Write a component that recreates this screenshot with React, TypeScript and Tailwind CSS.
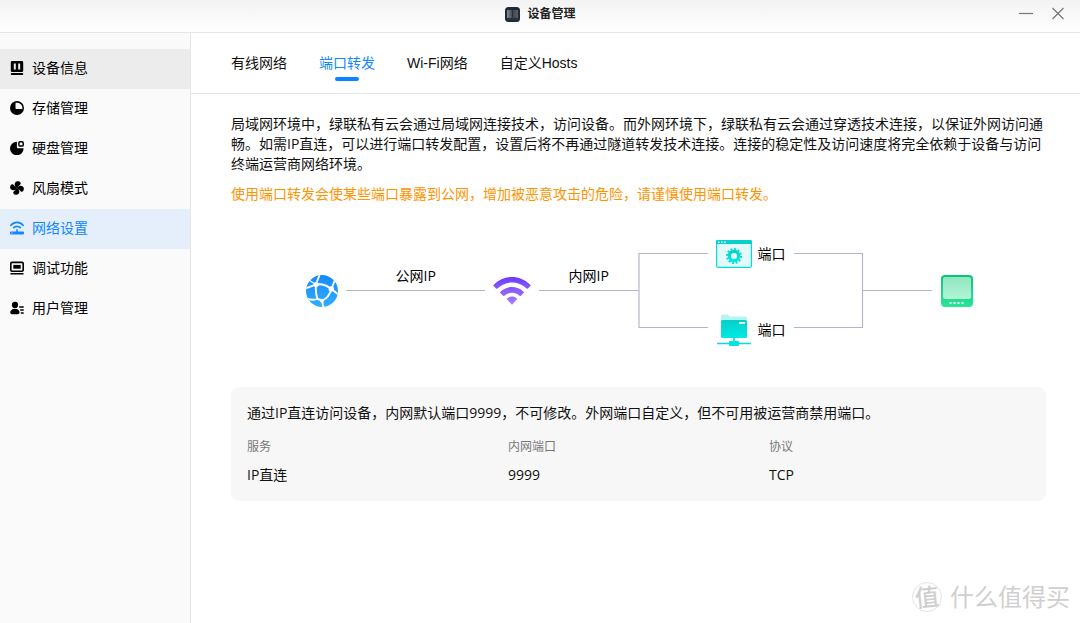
import { useState, type ReactNode } from 'react';

const uiFont = "font-['Open_Sans','Noto_Sans_CJK_SC',sans-serif]";
const tabFont = "font-['Liberation_Sans','Noto_Sans_CJK_SC',sans-serif]";

function MenuIcon({ children }: { children: ReactNode }) {
  return (
    <svg viewBox="0 0 14 14" className="size-[14px] shrink-0" fill="currentColor" aria-hidden="true">
      {children}
    </svg>
  );
}

const menu: { label: string; state?: 'hover' | 'active'; icon: ReactNode }[] = [
  {
    label: '设备信息',
    state: 'hover',
    icon: (
      <MenuIcon>
        <path
          fillRule="evenodd"
          d="M2.1 0h9.800A1.300 1.300 0 0 1 13.200 1.300v8.400a1.300 1.300 0 0 1-1.300 1.300H2.100A1.300 1.300 0 0 1 .8 9.700V1.300A1.300 1.300 0 0 1 2.100 0ZM3.800 2.400v6.200h2V2.400ZM8.200 2.400v6.200h2V2.400Z"
        />
        <rect x="0.800" y="12" width="12.400" height="2" rx="0.800" />
      </MenuIcon>
    ),
  },
  {
    label: '存储管理',
    icon: (
      <MenuIcon>
        <path
          fillRule="evenodd"
          d="M7 0a7 7 0 1 1 0 14A7 7 0 0 1 7 0Zm-.8 1.800A.8.8 0 0 0 5.500 2.600v4.700c0 .5.400.800.800.800h5.500c.5 0 .8-.4.700-.9A5.600 5.600 0 0 0 6.200 1.800Z"
        />
      </MenuIcon>
    ),
  },
  {
    label: '硬盘管理',
    icon: (
      <MenuIcon>
        <path d="M6.900.7v5.500c0 .6.500 1.100 1.100 1.100h5.600A6.800 6.800 0 1 1 6.900.7Z" />
        <rect x="8.900" y="0.800" width="4.300" height="4.300" rx="1.200" fill="none" stroke="currentColor" strokeWidth="1.500" />
      </MenuIcon>
    ),
  },
  {
    label: '风扇模式',
    icon: (
      <MenuIcon>
        <g transform="rotate(12 7 7)">
          <path d="M6.300 6.800C3.200 5.500 3 1 6 .2c2.400-.6 4.200.6 3.600 2.300C9.200 3.800 7.600 4 7.700 6.500Z" />
          <path d="M7.200 6.300C8.500 3.200 13 3 13.800 6c.6 2.400-.6 4.200-2.300 3.600C10.200 9.200 10 7.600 7.500 7.700Z" />
          <path d="M7.700 7.200C10.800 8.500 11 13 8 13.800c-2.400.6-4.200-.6-3.600-2.300C4.800 10.200 6.400 10 6.300 7.500Z" />
          <path d="M6.800 7.700C5.500 10.800 1 11 .2 8c-.6-2.400.6-4.200 2.300-3.600C3.800 4.800 4 6.400 6.500 6.300Z" />
        </g>
      </MenuIcon>
    ),
  },
  {
    label: '网络设置',
    state: 'active',
    icon: (
      <MenuIcon>
        <path
          d="M.9 4.300C4.300.3 9.700.3 13.100 4.300M3.800 6.700c1.800-1.900 4.600-1.900 6.400 0"
          fill="none"
          stroke="currentColor"
          strokeWidth="1.700"
          strokeLinecap="round"
        />
        <path
          fillRule="evenodd"
          d="M6.200 8.200h1.600v2.200h5.300c.5 0 .9.400.9.900v1.200c0 .5-.4.900-.9.900H.9a.9.9 0 0 1-.9-.9v-1.200c0-.5.400-.9.900-.9h5.300ZM1.500 11.400v1h1v-1Z"
        />
      </MenuIcon>
    ),
  },
  {
    label: '调试功能',
    icon: (
      <MenuIcon>
        <rect x="0.800" y="1.400" width="12.400" height="8.800" rx="1.200" fill="none" stroke="currentColor" strokeWidth="1.600" />
        <rect x="3.300" y="3.900" width="7.400" height="3.800" />
        <rect x="0.400" y="12" width="13.200" height="1.600" rx="0.500" />
      </MenuIcon>
    ),
  },
  {
    label: '用户管理',
    icon: (
      <MenuIcon>
        <circle cx="5" cy="3.900" r="3.100" />
        <path d="M5 7.800c1.800 0 3.400.9 4.200 2.200.7 1.200.4 3.200-1.200 3.200H1.900c-1.600 0-2.100-1.900-1.300-3.200A5 5 0 0 1 5 7.800Z" />
        <path d="M9.200 5.200h4.500v1.500H9.200ZM10.200 8.200h3.500v1.500h-3.500ZM10.800 11.200h2.900v1.500h-2.900Z" />
      </MenuIcon>
    ),
  },
];

const tabs = ['有线网络', '端口转发', 'Wi-Fi网络', '自定义Hosts'];

function TitleBar() {
  return (
    <header className="flex h-[33px] items-center border-b border-[#e6e6e6] bg-linear-to-b from-[#f3f3f3] to-white">
      <div className="flex-1" />
      <div className="flex items-center gap-2 pb-1">
        <svg viewBox="0 0 15 15" className="size-[15px]" aria-hidden="true">
          <defs>
            <linearGradient id="app" x1="0" y1="0" x2="1" y2="0">
              <stop offset="0" stopColor="#8a8c96" />
              <stop offset="0.500" stopColor="#40424c" />
              <stop offset="1" stopColor="#5c5e66" />
            </linearGradient>
          </defs>
          <rect width="15" height="15" rx="3.500" fill="#1d2a38" />
          <rect x="2" y="3" width="11" height="8" rx="0.500" fill="url(#app)" />
          <path d="M7.500 3.300v7" stroke="#20242d" strokeWidth="0.700" />
          <path d="M2 12.200h11" stroke="#39434e" strokeWidth="0.800" />
        </svg>
        <h1 className="text-xs font-semibold text-[#222]">设备管理</h1>
      </div>
      <div className="flex flex-1 items-center justify-end pb-1 text-[#777]">
        <div className="-ml-3 flex gap-4 pr-[14px]">
          <button type="button" aria-label="最小化" className="flex size-4 items-center justify-center">
            <svg viewBox="0 0 16 16" className="size-4" aria-hidden="true">
              <path d="M1 7.500h14" stroke="currentColor" strokeWidth="1.200" />
            </svg>
          </button>
          <button type="button" aria-label="关闭" className="flex size-4 items-center justify-center">
            <svg viewBox="0 0 16 16" className="size-4" aria-hidden="true">
              <path d="M2.500 2l11 11M13.500 2l-11 11" stroke="currentColor" strokeWidth="1.200" />
            </svg>
          </button>
        </div>
      </div>
    </header>
  );
}

function Sidebar() {
  const tone = {
    hover: 'bg-[#ececec] text-black',
    active: 'bg-[#e4effb] text-[#1287ff]',
    idle: 'text-black hover:bg-[#ececec]',
  };
  return (
    <nav className="w-[191px] shrink-0 border-r border-[#e6e6e6] bg-[#fafafa] pt-4">
      <ul>
        {menu.map((item) => (
          <li key={item.label}>
            <a
              href="#"
              aria-current={item.state === 'active' ? 'page' : undefined}
              className={`flex h-10 items-center gap-2 pb-0.5 pl-[10px] text-sm ${tone[item.state ?? 'idle']}`}
            >
              {item.icon}
              {item.label}
            </a>
          </li>
        ))}
      </ul>
    </nav>
  );
}

function Diagram() {
  const label = 'absolute text-sm leading-5 text-black';
  return (
    <div className="relative mx-auto h-[110px] w-[668px]">
      <svg viewBox="0 0 668 110" className="h-[110px] w-[668px]" fill="none" aria-hidden="true">
        <defs>
          <linearGradient id="ball" x1="0" y1="0" x2="0" y2="1">
            <stop stopColor="#1788fb" />
            <stop offset="1" stopColor="#2eafff" />
          </linearGradient>
          <linearGradient id="wave" x1="0" y1="39" x2="0" y2="67" gradientUnits="userSpaceOnUse">
            <stop stopColor="#7038ff" />
            <stop offset="1" stopColor="#aa83ff" />
          </linearGradient>
          <linearGradient id="teal" x1="0" y1="0" x2="0" y2="1">
            <stop stopColor="#05cfca" />
            <stop offset="1" stopColor="#00ebe4" />
          </linearGradient>
          <linearGradient id="nas" x1="0" y1="0" x2="0" y2="1">
            <stop stopColor="#08c574" />
            <stop offset="1" stopColor="#2be596" />
          </linearGradient>
          <linearGradient id="screen" x1="0" y1="0" x2="0" y2="1">
            <stop stopColor="#91e6c1" />
            <stop offset="1" stopColor="#b2f5d7" />
          </linearGradient>
          <clipPath id="ballClip">
            <circle cx="17" cy="53" r="16" />
          </clipPath>
        </defs>

        <path
          d="M41 52.500H180M234 52.500H334M403 15.500H334V89.500H403M489 15.500H557.500V89.500H489M558 52.500H627"
          stroke="#b3b6ca"
          strokeWidth="1.200"
        />

        <circle cx="17" cy="53" r="16" fill="url(#ball)" />
        <g clipPath="url(#ballClip)">
          <path
            d="M11 46.500C15 46 19 45.500 26.500 51M26.500 51C25 56 22 60.500 17.500 62.500M11 46.500C10.500 52 11 57 12.500 61M12.500 61 17.500 62.500M11 46.500 14.500 37M11 46.500 0 50.500M26.500 51 30 41.500M26.500 51 34 57M17 62.500 18.500 70M12.500 61C9 62.500 6 62 1 60.500"
            stroke="#fff"
            strokeWidth="1.900"
            strokeLinejoin="round"
          />
          <path d="M4.500 42.500 11 46.500" stroke="#fff" strokeWidth="1.400" />
          <circle cx="11.300" cy="46.500" r="2.500" fill="#fff" />
          <circle cx="26.300" cy="51" r="2.700" fill="#fff" />
          <circle cx="17" cy="62.800" r="2" fill="#fff" />
        </g>

        <g fill="url(#wave)">
          <path d="M188.700 46.700C199.500 36.400 214.500 36.400 225.300 46.700a1 1 0 0 1 0 1.400l-2.300 2.300a1 1 0 0 1-1.400 0C213 42.600 201 42.600 192.400 50.400a1 1 0 0 1-1.400 0l-2.300-2.300a1 1 0 0 1 0-1.400Z" />
          <path d="M195.400 53.700C202.100 47.500 211.900 47.500 218.600 53.700a1 1 0 0 1 0 1.400L216 57.700a1 1 0 0 1-1.400 0C210.200 53.800 203.800 53.800 199.400 57.700a1 1 0 0 1-1.400 0L195.400 55.100a1 1 0 0 1 0-1.400Z" />
          <path d="M202.200 60.400C205.300 58 208.700 58 211.800 60.400a.8.800 0 0 1 0 1.200L207.600 66.200a.8.800 0 0 1-1.200 0L202.200 61.600a.8.800 0 0 1 0-1.200Z" />
        </g>

        <rect x="411.600" y="2.600" width="34.800" height="26.800" rx="1.500" fill="#e2fafa" stroke="#05dcd7" strokeWidth="1.200" />
        <path d="M411 6V3.500a1.500 1.500 0 0 1 1.500-1.500h33a1.500 1.500 0 0 1 1.500 1.500V6Z" fill="#08cfca" />
        <path d="M413 4.200h1.600M416 4.200h1.600M419 4.200h1.600" stroke="#d8ffff" strokeWidth="1.400" />
        <circle cx="429" cy="18" r="4.700" stroke="url(#teal)" strokeWidth="3.200" />
        <circle cx="429" cy="18" r="7" stroke="#08d8d2" strokeWidth="2" strokeDasharray="1.832 1.832" />

        <path d="M416 84V78a1.500 1.500 0 0 1 1.500-1.500H422a2 2 0 0 1 1.500.6L424.500 78.500H440.500A1.500 1.500 0 0 1 442 80V86H416Z" fill="#b5f4f1" />
        <rect x="416" y="82" width="26" height="18" rx="1.500" fill="url(#teal)" />
        <rect x="434" y="84" width="6" height="1.800" rx="0.600" fill="#fff" />
        <path d="M429 99v6M412 105.500h34" stroke="#07ded9" strokeWidth="1.600" />
        <rect x="424" y="103" width="10" height="5" rx="0.800" fill="#04e2dc" />

        <rect x="636" y="37" width="32" height="32" rx="4" fill="url(#nas)" />
        <rect x="638" y="39" width="28" height="22" rx="2" fill="url(#screen)" />
        <path d="M644.500 65h2M648.500 65h2M652.500 65h2M656.500 65h2" stroke="#e8fff5" strokeWidth="2" />
      </svg>
      <span className={`${label} top-[28px] left-[91px]`}>公网IP</span>
      <span className={`${label} top-[28px] left-[264px]`}>内网IP</span>
      <span className={`${label} top-[6px] left-[453px]`}>端口</span>
      <span className={`${label} top-[82px] left-[453px]`}>端口</span>
    </div>
  );
}

function PortCard() {
  return (
    <section className="rounded-lg bg-[#f7f7f7] px-4 pt-4 pb-[10px] text-[#111]">
      <p className="text-sm leading-5">通过IP直连访问设备，内网默认端口9999，不可修改。外网端口自定义，但不可用被运营商禁用端口。</p>
      <table className="mt-3 w-full table-fixed text-left">
        <thead>
          <tr className="h-6 text-xs text-[#777]">
            <th className="p-0 font-normal">服务</th>
            <th className="p-0 font-normal">内网端口</th>
            <th className="p-0 font-normal">协议</th>
          </tr>
        </thead>
        <tbody>
          <tr className="h-8 text-sm leading-5">
            <td className="p-0">IP直连</td>
            <td className="p-0">9999</td>
            <td className="p-0">TCP</td>
          </tr>
        </tbody>
      </table>
    </section>
  );
}

export default function App() {
  const [tab, setTab] = useState(1);
  return (
    <div lang="zh-CN" className={`relative flex min-h-screen flex-col bg-white ${uiFont}`}>
      <TitleBar />
      <div className="flex flex-1">
        <Sidebar />
        <main className="min-w-0 flex-1">
          <div role="tablist" className={`flex h-[61px] gap-8 border-b border-[#e6e6e6] pl-10 ${tabFont}`}>
            {tabs.map((name, i) => (
              <button
                key={name}
                type="button"
                role="tab"
                aria-selected={i === tab}
                onClick={() => setTab(i)}
                className={`flex flex-col items-center gap-1 pt-5 text-sm leading-5 ${i === tab ? 'text-[#1287ff]' : 'text-[#111]'}`}
              >
                {name}
                {i === tab && <span className="h-1 w-6 rounded-full bg-[#0a84ff]" />}
              </button>
            ))}
          </div>
          <div className="pt-5 pr-[34px] pl-10">
            <p className="text-sm leading-5 text-[#111]">
              局域网环境中，绿联私有云会通过局域网连接技术，访问设备。而外网环境下，绿联私有云会通过穿透技术连接，以保证外网访问通畅。如需IP直连，可以进行端口转发配置，设置后将不再通过隧道转发技术连接。连接的稳定性及访问速度将完全依赖于设备与访问终端运营商网络环境。
            </p>
            <p className="mt-[10px] text-sm leading-5 text-[#ff9300]">
              使用端口转发会使某些端口暴露到公网，增加被恶意攻击的危险，请谨慎使用端口转发。
            </p>
            <div className="pt-[34px] pb-[39px]">
              <Diagram />
            </div>
            <PortCard />
          </div>
        </main>
      </div>
      <div className="absolute right-[10px] bottom-2 flex items-center gap-2 text-[#cfcfcf]">
        <span className="flex size-[30px] items-center justify-center rounded-full border border-[#e4e4e4] text-2xl leading-none font-medium">
          <span className="-rotate-6">值</span>
        </span>
        <span className="text-2xl leading-9">什么值得买</span>
      </div>
    </div>
  );
}
